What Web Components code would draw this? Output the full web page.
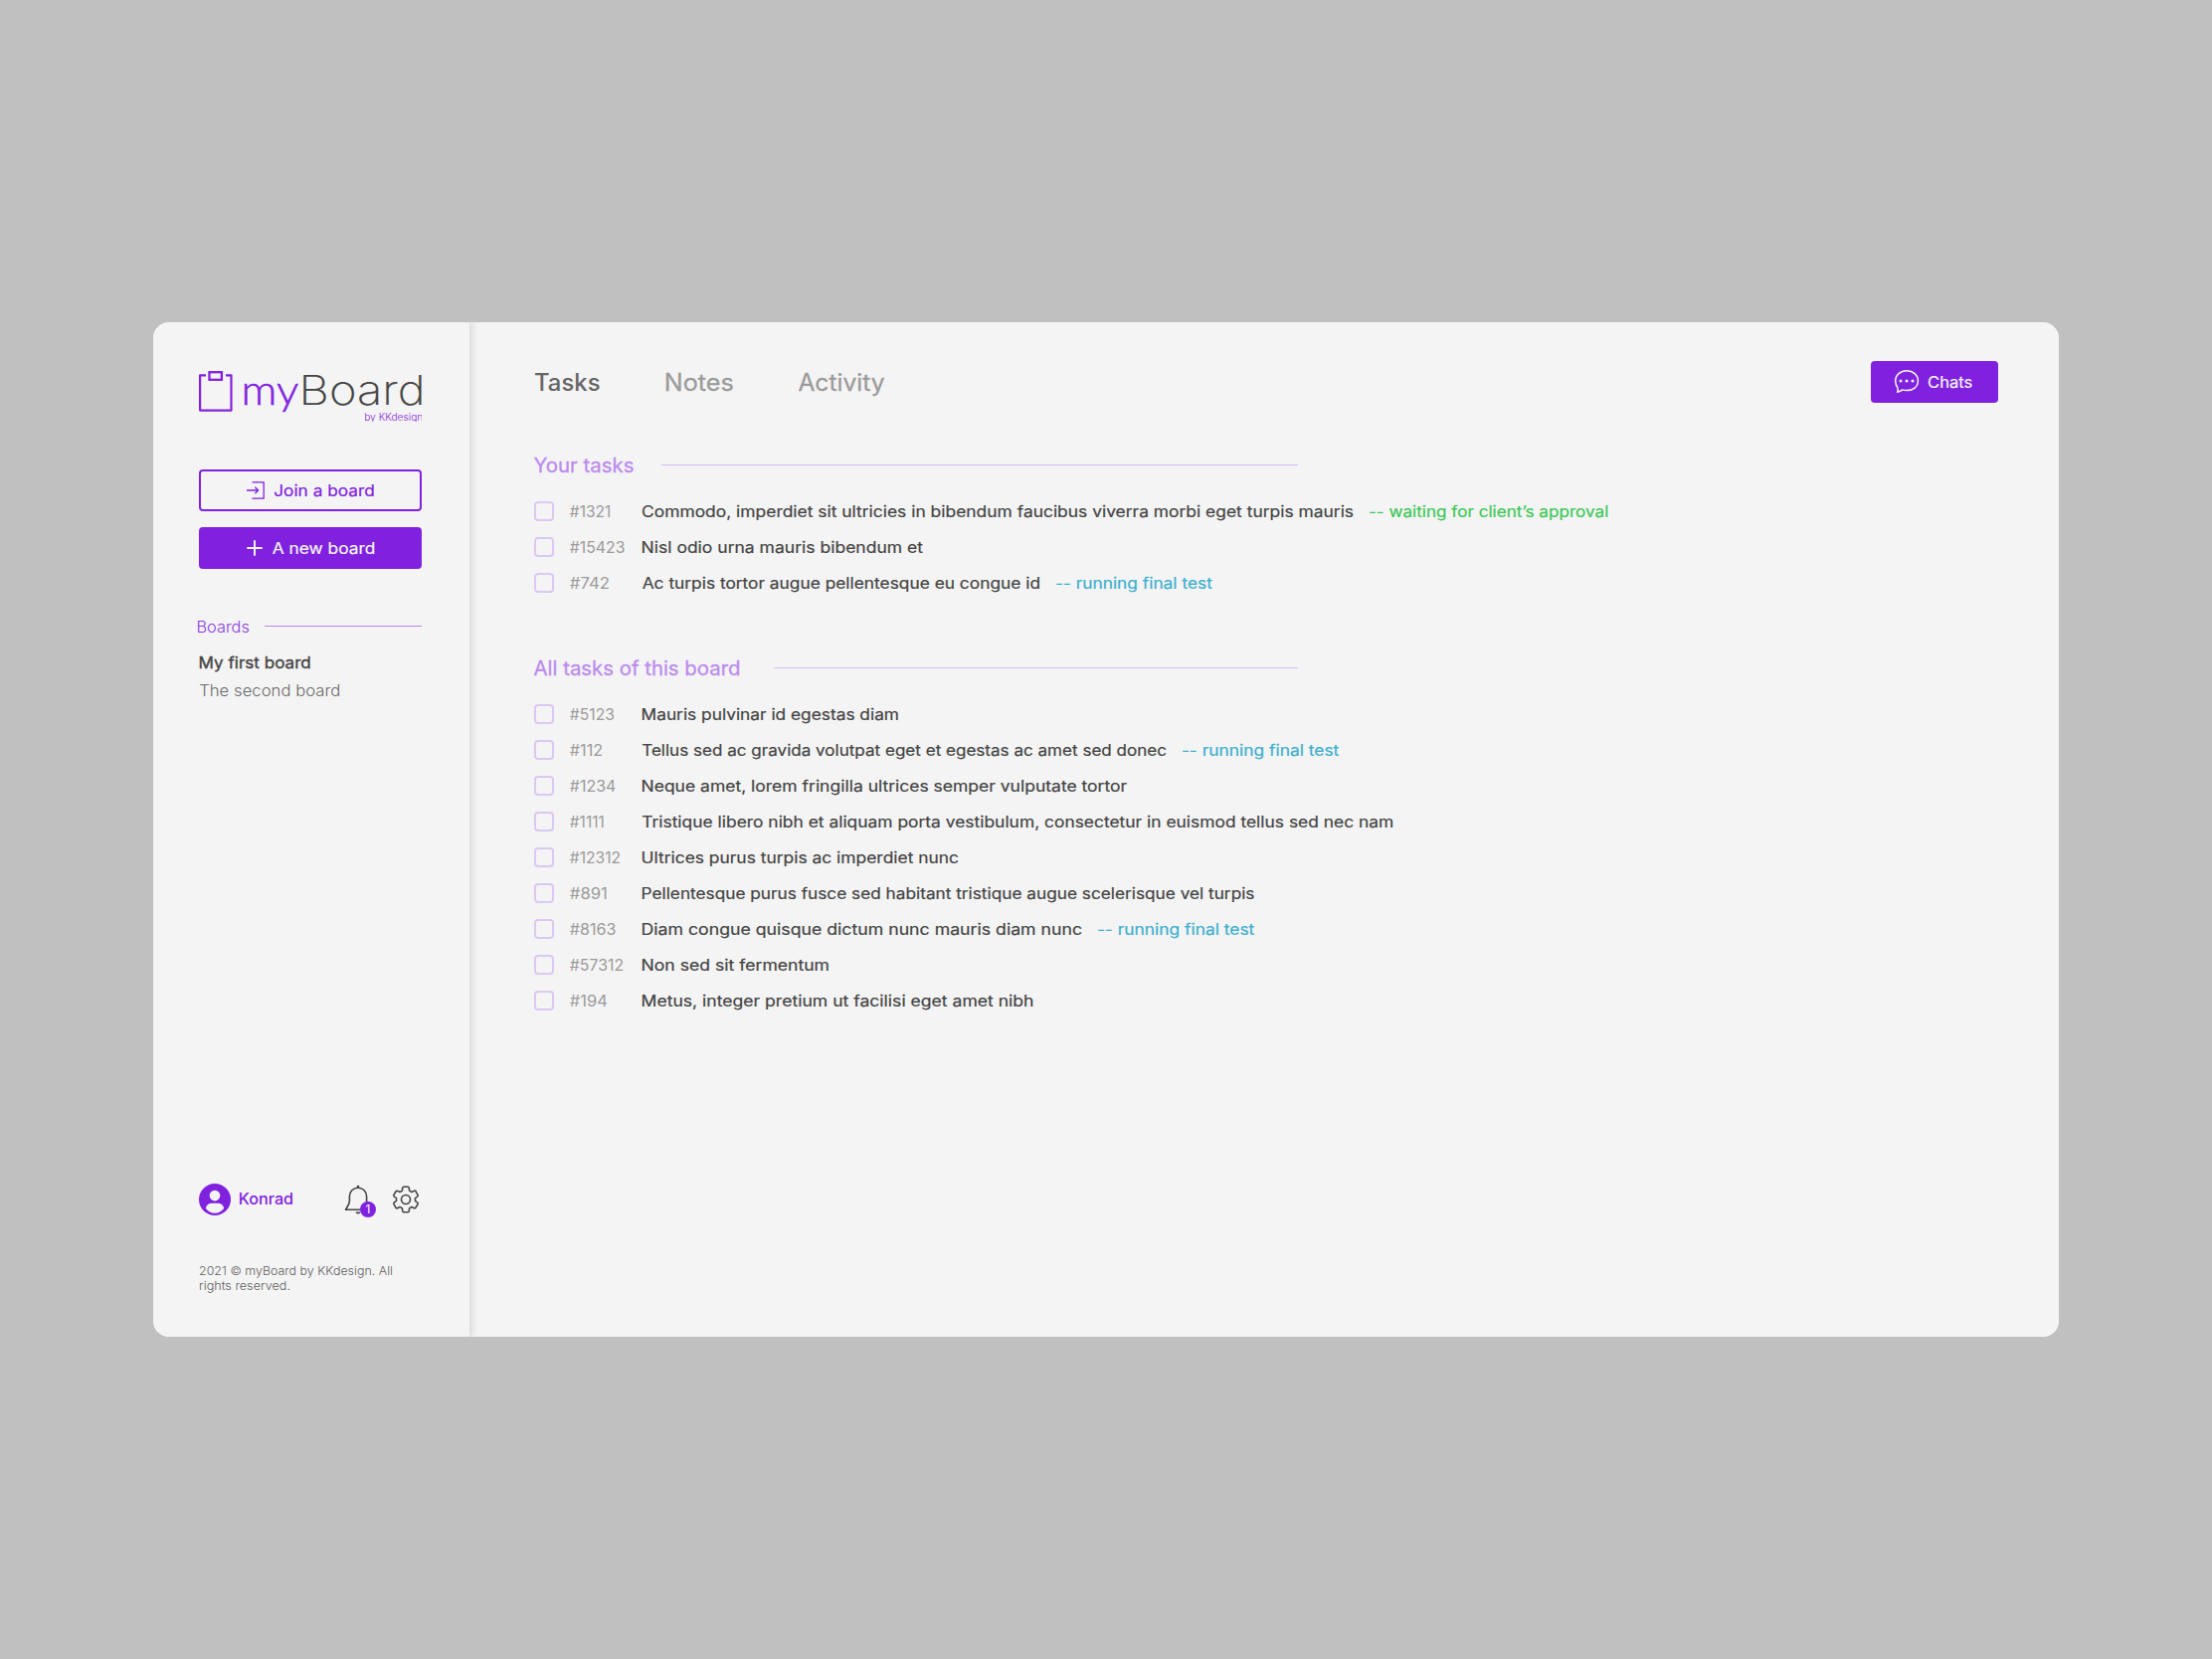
<!DOCTYPE html>
<html lang="en">
<head>
<meta charset="utf-8">
<title>myBoard</title>
<style>
  body { margin: 0; height: 1668px; background: #c0c0c0; display: flex; align-items: center; justify-content: center; font-family: Inter, "Liberation Sans", sans-serif; }
</style>
</head>
<body>
<my-board></my-board>
<script>
const define = (name, html, setup) => {
  const t = document.createElement('template');
  t.innerHTML = html;
  customElements.define(name, class extends HTMLElement {
    connectedCallback() {
      if (this.shadowRoot) return;
      this.attachShadow({ mode: 'open' }).appendChild(t.content.cloneNode(true));
      if (setup) setup(this, this.shadowRoot);
    }
  });
};

/* A single line of text stretched so its ink spans exactly `w` pixels.
   Measured at ten times the size, because glyph bounds are rounded to whole pixels. */
const ctx = document.createElement('canvas').getContext('2d');
define('fit-text', `
<style>
  :host { display: block; flex: none; white-space: nowrap; }
  span { display: inline-block; transform-origin: 0 50%; vertical-align: top; }
</style><span><slot></slot></span>`, (el, root) => {
  const w = +el.getAttribute('w');
  const cs = getComputedStyle(el);
  ctx.font = `${cs.fontWeight} ${parseFloat(cs.fontSize) * 10}px ${cs.fontFamily}`;
  const m = ctx.measureText(el.textContent);
  const left = m.actualBoundingBoxLeft / 10, right = m.actualBoundingBoxRight / 10;
  const span = root.querySelector('span');
  const drift = span.getBoundingClientRect().width / (m.width / 10);
  const k = w / ((right + left) * drift);
  el.style.width = w + 'px';
  span.style.transform = `translateX(${left * k}px) scaleX(${k})`;
});

define('board-logo', `
<style>
  :host { display: flex; height: 51px; color: #8121e0; }
  svg { flex: none; display: block; margin-right: 11.3px; }
  .word { flex: 1; display: flex; flex-direction: column; align-items: flex-end; }
  .name { display: flex; align-items: baseline; gap: 6px; height: 37px; line-height: 37px; }
  .my { font-family: Lato, sans-serif; font-size: 42px; font-weight: 300; -webkit-text-stroke: .5px #8121e0; }
  .dark { color: #444; font-size: 41px; font-weight: 200; -webkit-text-stroke: .2px #444; }
  .by { height: 14px; line-height: 19px; font-size: 10px; font-weight: 300; overflow: hidden; }
</style>
<svg width="34" height="42" viewBox="0 0 34 42" fill="none" stroke="#8121e0" stroke-width="2.2" stroke-linejoin="round"><path d="M7 4.4H1.1V39.6H32.5V4.4H27"/><rect x="10.5" y="1.2" width="12.4" height="7.6" stroke-width="2.3" stroke-linejoin="miter"/></svg>
<div class="word">
  <div class="name"><fit-text class="my" w="53.5">my</fit-text><fit-text class="dark" w="119">Board</fit-text></div>
  <div class="by"><fit-text w="57.5">by KKdesign</fit-text></div>
</div>`);

define('side-button', `
<style>
  :host { box-sizing: border-box; display: flex; align-items: center; height: 42px; padding-left: 46px; border: 2px solid #8121e0; border-radius: 4px; color: #8121e0; font-size: 15.5px; font-weight: 400; line-height: 20px; -webkit-text-stroke: .2px; }
  :host([filled]) { background: #8121e0; color: #f4f4f4; }
  ::slotted(svg) { flex: none; display: block; }
  ::slotted(fit-text) { padding-top: 2px; }
</style><slot></slot>`);

define('board-list', `
<style>
  :host { display: block; margin-top: 48px; }
  header { display: flex; align-items: center; height: 20px; margin-left: -1px; color: #8a3be0; font-size: 16px; font-weight: 300; line-height: 20px; }
  hr { flex: 1; margin: 0 0 2px 16px; border: 0; height: 1px; background: #b786ee; }
  ul { list-style: none; margin: 13px 0 0 .6px; padding: 0; font-size: 15.5px; line-height: 28px; color: #6b6b6b; font-weight: 300; }
  li:first-child { color: #444; font-weight: 400; -webkit-text-stroke: .35px; }
</style>
<header><fit-text w="51">Boards</fit-text><hr></header>
<ul><li><fit-text w="110.5">My first board</fit-text></li><li><fit-text w="140">The second board</fit-text></li></ul>`);

define('gear-icon', `<style>:host { display: block; width: 28px; height: 28px; } svg { display: block; }</style>
<svg width="28" height="28" viewBox="-14 -14 28 28" fill="none" stroke="#444" stroke-width="1.6" stroke-linejoin="round"><path/><circle r="4.5"/></svg>`, (el, root) => {
  const p = (r, a) => { const t = (a - 90) * Math.PI / 180; return (r * Math.cos(t)).toFixed(2) + ' ' + (r * Math.sin(t)).toFixed(2); };
  let d = 'M' + p(9.6, -22);
  for (let i = 0; i < 6; i++) {
    const a = i * 60;
    d += `Q${p(10.6, a - 19)} ${p(11.6, a - 17)}Q${p(13, a - 15)} ${p(13, a - 10)}L${p(12.9, a + 10)}Q${p(13, a + 15)} ${p(11.6, a + 17)}Q${p(10.6, a + 19)} ${p(9.6, a + 22)}Q${p(9.3, a + 30)} ${p(9.6, a + 38)}`;
  }
  root.querySelector('path').setAttribute('d', d + 'Z');
});

define('bell-icon', `
<style>
  :host { display: block; position: relative; width: 32px; height: 30px; }
  svg { display: block; }
  b { position: absolute; left: 16px; top: 17px; width: 16px; height: 16px; border-radius: 50%; background: #8121e0; color: #f4f4f4; font-size: 12px; font-weight: 400; line-height: 16px; text-align: center; }
</style>
<svg width="28" height="30" viewBox="0 0 28 30" fill="none" stroke="#444" stroke-width="1.6" stroke-linejoin="round"><path d="M14 3.2C9 3.2 5.4 7 5.4 12V16.5C5.4 20 3.3 22.3 1.5 25.2H26.5C24.7 22.3 22.6 20 22.6 16.5V12C22.6 7 19 3.2 14 3.2Z"/><circle cx="14" cy="2" r="1.3" fill="#444" stroke="none"/><path d="M11.5 27.4a2.5 2 0 0 0 5 0z" fill="#444" stroke="none"/></svg><b>1</b>`);

define('user-bar', `
<style>
  :host { display: flex; align-items: center; height: 32px; color: #8121e0; font-size: 16px; font-weight: 500; line-height: 20px; margin-top: auto; }
  svg { display: block; margin-right: 8.5px; }
  fit-text { padding-bottom: 2px; }
  .grow { flex: 1; }
  gear-icon { margin: 0 2px 0 16px; }
</style>
<svg width="32" height="32" viewBox="0 0 32 32"><circle cx="16" cy="16" r="16" fill="#8121e0"/><circle cx="16" cy="12.1" r="5.3" fill="#f4f4f4"/><path d="M6.8 24.8C7.6 21.6 10 19.8 13 19.8h6c3 0 5.4 1.8 6.2 5C22.8 28.3 19.5 29.8 16 29.8S9.2 28.3 6.8 24.8Z" fill="#f4f4f4"/></svg>
<fit-text w="53">Konrad</fit-text><span class="grow"></span><bell-icon></bell-icon><gear-icon></gear-icon>`);

define('side-bar', `
<style>
  :host { box-sizing: border-box; width: 318px; flex: none; display: flex; flex-direction: column; padding: 49px 48px 43px 46px; background: #f4f4f4; box-shadow: 2px 0 8px rgba(0,0,0,.14); z-index: 1; }
  .buttons { display: flex; flex-direction: column; gap: 16px; margin-top: 48px; }
  footer { margin: 49px 0 0 .5px; color: #5f5f5f; font-size: 11.5px; font-weight: 300; line-height: 15px; }
</style>
<board-logo></board-logo>
<div class="buttons">
  <side-button><svg width="18" height="18" viewBox="0 0 18 18" style="margin-right:9.5px" fill="none" stroke="#8121e0" stroke-width="1.3"><path d="M5.5 .8H17.2V17.2H5.5M0 9H11.6M8.4 5.8L11.6 9L8.4 12.2"/></svg><fit-text w="99.5">Join a board</fit-text></side-button>
  <side-button filled><svg width="16" height="16" viewBox="0 0 16 16" style="margin-right:10px" stroke="#f4f4f4" stroke-width="2"><path d="M.3 8H15.7M8 .3V15.7"/></svg><fit-text w="102">A new board</fit-text></side-button>
</div>
<board-list></board-list>
<user-bar></user-bar>
<footer><fit-text w="193">2021 © myBoard by KKdesign. All</fit-text><fit-text w="90">rights reserved.</fit-text></footer>`);

define('tab-bar', `
<style>
  :host { display: flex; align-items: center; height: 42px; color: #9b9b9b; font-size: 24px; font-weight: 400; line-height: 30px; }
  .tab { margin-right: 67px; padding: 2px 0 0; -webkit-text-stroke: .3px; }
  .on { color: #666; font-weight: 500; padding-left: 1px; margin-right: 67px; -webkit-text-stroke: 0; }
  .chats { margin-left: auto; box-sizing: border-box; width: 128px; height: 42px; border-radius: 4px; background: #8121e0; color: #f4f4f4; display: flex; align-items: center; padding-left: 23px; font-size: 16px; -webkit-text-stroke: .2px; }
  .chats svg { margin-right: 8.5px; }
</style>
<fit-text class="tab on" w="64.5">Tasks</fit-text><fit-text class="tab" w="66.5">Notes</fit-text><fit-text class="tab" w="86">Activity</fit-text>
<div class="chats"><svg width="26" height="26" viewBox="0 0 26 26" fill="none" stroke="#f4f4f4" stroke-width="1.5" stroke-linejoin="round"><path d="M3.6 23.2C4.4 21.5 4.4 20 3.8 18.7C2.5 17 1.7 14.6 1.7 12C1.7 6 6.7 1.7 13 1.7S24.4 6 24.4 12 19.4 21.6 13 21.6C11.3 21.6 10 21.4 8.8 20.9C7.4 22 5.6 22.8 3.6 23.2Z"/><g fill="#f4f4f4" stroke="none"><circle cx="7" cy="12" r="1.5"/><circle cx="13" cy="12" r="1.5"/><circle cx="19" cy="12" r="1.5"/></g></svg><fit-text w="43.5">Chats</fit-text></div>`);

define('task-row', `
<style>
  :host { display: flex; align-items: center; height: 20px; font-size: 15.5px; font-weight: 400; line-height: 20px; color: #444; }
  i { box-sizing: border-box; width: 20px; height: 20px; border: 2px solid #dcc8f2; border-radius: 4px; margin-right: 16px; }
  div { padding-top: 2px; -webkit-text-stroke: .2px; }
  .id { width: 72.5px; color: #9b9b9b; -webkit-text-stroke: 0; }
  .status { margin-left: 17.5px; }
</style><i></i><div class="id"></div><div class="text"></div><div class="status"></div>`, (el, root) => {
  const fill = (cls, text, w) => {
    const f = document.createElement('fit-text');
    f.textContent = text;
    f.setAttribute('w', w);
    root.querySelector(cls).append(f);
  };
  const [id, idW, text, w, status, sw] = el.data;
  fill('.id', id, idW);
  fill('.text', text, w);
  if (status) {
    root.querySelector('.status').style.color = status.includes('wait') ? '#3cc857' : '#3dafcf';
    fill('.status', status, sw);
  }
});

define('task-group', `
<style>
  :host { display: block; }
  header { display: flex; align-items: center; width: 768px; height: 26px; color: #bb8bee; font-size: 20px; font-weight: 400; line-height: 26px; -webkit-text-stroke: .3px; }
  hr { flex: 1; margin: 0 0 1px; border: 0; height: 1px; background: #d6bdf0; }
  .rows { display: flex; flex-direction: column; gap: 16px; margin-top: 23px; }
</style><header></header><div class="rows"></div>`, (el, root) => {
  const g = el.data;
  root.querySelector('header').innerHTML = `<fit-text w="${g.w}">${g.title}</fit-text><hr style="margin-left:${g.gap}px">`;
  for (const data of g.rows) {
    const r = document.createElement('task-row');
    r.data = data;
    root.querySelector('.rows').append(r);
  }
});

define('task-panel', `
<style>
  :host { flex: 1; box-sizing: border-box; padding: 39px 61px 0 65px; background: #f4f4f4; }
  .groups { display: flex; flex-direction: column; gap: 63px; margin-top: 50px; }
</style><tab-bar></tab-bar><div class="groups"></div>`, (el, root) => {
  const test = '-- running final test';
  const groups = [
    { title: 'Your tasks', w: 99.5, gap: 28, rows: [
      ['#1321', 40, 'Commodo, imperdiet sit ultricies in bibendum faucibus viverra morbi eget turpis mauris', 714.3, '-- waiting for client’s approval', 239],
      ['#15423', 54.5, 'Nisl odio urna mauris bibendum et', 281.7],
      ['#742', 39, 'Ac turpis tortor augue pellentesque eu congue id', 398.7, test, 156.5]] },
    { title: 'All tasks of this board', w: 206, gap: 35, rows: [
      ['#5123', 44, 'Mauris pulvinar id egestas diam', 256.7],
      ['#112', 32, 'Tellus sed ac gravida volutpat eget et egestas ac amet sed donec', 526.2, test, 157],
      ['#1234', 45.5, 'Neque amet, lorem fringilla ultrices semper vulputate tortor', 486.7],
      ['#1111', 33.5, 'Tristique libero nibh et aliquam porta vestibulum, consectetur in euismod tellus sed nec nam', 754],
      ['#12312', 50, 'Ultrices purus turpis ac imperdiet nunc', 317.2],
      ['#891', 36.5, 'Pellentesque purus fusce sed habitant tristique augue scelerisque vel turpis', 614.7],
      ['#8163', 45.5, 'Diam congue quisque dictum nunc mauris diam nunc', 441.2, test, 157],
      ['#57312', 53, 'Non sed sit fermentum', 186.7],
      ['#194', 37, 'Metus, integer pretium ut facilisi eget amet nibh', 392.2]] }];
  for (const g of groups) {
    const e = document.createElement('task-group');
    e.data = g;
    root.querySelector('.groups').append(e);
  }
});

define('my-board', `
<style>
  :host { display: flex; width: 1916px; height: 1020px; border-radius: 16px; overflow: hidden; background: #f4f4f4; }
</style><side-bar></side-bar><task-panel></task-panel>`);
</script>
</body>
</html>
